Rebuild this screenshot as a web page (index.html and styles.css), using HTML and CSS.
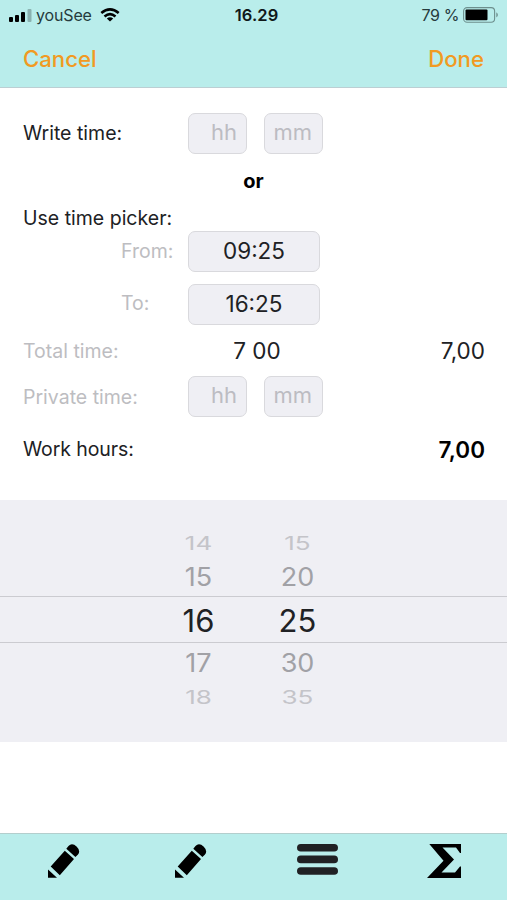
FILE: index.html
```html
<!DOCTYPE html>
<html lang="en">
<head>
<meta charset="utf-8">
<title>Work hours</title>
<link rel="stylesheet" href="styles.css">
</head>
<body>
<header class="header">
  <div class="status">
    <div class="carrier">
      <svg width="23" height="13" viewBox="0 0 23 13"><g fill="#000"><rect x="0" y="8" width="4" height="5" rx="1"/><rect x="6" y="6" width="4" height="7" rx="1"/><rect x="12" y="3" width="4" height="10" rx="1"/><rect x="18.5" y="0" width="4" height="13" rx="1" opacity=".25"/></g></svg>
      <span class="network">youSee</span>
      <svg class="wifi" width="20" height="14" viewBox="0 0 20 14"><g fill="none" stroke="#000" stroke-width="2.6"><path d="M1.3 5.1Q10-2.3 18.7 5.1"/><path d="M4.5 8.5Q10 3.9 15.5 8.5"/></g><path d="M10 13.5 6.8 10.4Q10 8 13.2 10.4Z"/></svg>
    </div>
    <span class="clock">16.29</span>
    <div class="power">
      <span class="percent">79 %</span>
      <svg width="36" height="16" viewBox="0 0 36 16"><rect x=".6" y=".6" width="31" height="14.6" rx="3.5" fill="none" stroke="#6d8f8d" stroke-width="1.1"/><rect x="2.5" y="2.5" width="22" height="10.8" rx="1"/><path d="M33.3 5.2Q36.5 7.9 33.3 10.6Z" fill="#6d8f8d"/></svg>
    </div>
  </div>
  <nav class="nav"><span class="cancel">Cancel</span><span class="done">Done</span></nav>
</header>
<main class="form">
  <div class="row row-write"><span class="label write">Write time:</span><div class="pair"><span class="field hh"><i>hh</i></span><span class="field mm"><i>mm</i></span></div></div>
  <div class="or">or</div>
  <div class="heading">Use time picker:</div>
  <div class="row row-from"><span class="label muted indent from">From:</span><span class="field wide"><b>09:25</b></span></div>
  <div class="row row-to"><span class="label muted indent to">To:</span><span class="field wide"><b>16:25</b></span></div>
  <div class="row row-total"><span class="label muted total">Total time:</span><span class="sum">7 00</span><span class="result">7,00</span></div>
  <div class="row row-private"><span class="label muted private">Private time:</span><div class="pair"><span class="field hh"><i>hh</i></span><span class="field mm"><i>mm</i></span></div></div>
  <div class="row row-work"><span class="label work">Work hours:</span><span></span><span class="result strong">7,00</span></div>
</main>
<section class="picker">
  <div class="line far"><span>14</span><span>15</span></div>
  <div class="line near"><span>15</span><span>20</span></div>
  <div class="line selected"><span>16</span><span>25</span></div>
  <div class="line near below"><span>17</span><span>30</span></div>
  <div class="line far"><span>18</span><span>35</span></div>
</section>
<footer class="tabs">
  <div class="tab"><svg width="32" height="35" viewBox="0 0 32 35"><path d="M0 25.5 9 33.8H0ZM2.7 22.6 16.8 6.7 26 15 11.8 31.2ZM18.3 4.7 20.5 2.1Q24-1.8 28.8 2.8 33 7 29.8 10.7L27.4 13Z"/></svg></div>
  <div class="tab"><svg width="32" height="35" viewBox="0 0 32 35"><path d="M0 25.5 9 33.8H0ZM2.7 22.6 16.8 6.7 26 15 11.8 31.2ZM18.3 4.7 20.5 2.1Q24-1.8 28.8 2.8 33 7 29.8 10.7L27.4 13Z"/></svg></div>
  <div class="tab menu"><svg width="41" height="31" viewBox="0 0 41 31" fill="#202124"><rect width="41" height="7.6" rx="3.8"/><rect y="11.6" width="41" height="7.6" rx="3.8"/><rect y="23.2" width="41" height="7.6" rx="3.8"/></svg></div>
  <div class="tab"><svg width="34" height="34" viewBox="0 0 34 34"><path d="M2.3 0H34V9H33L29 3.5H15.5L27 15.5 14.5 28.5H28L33 22.5H34V34H0L16.5 16.8Z"/></svg></div>
</footer>
</body>
</html>
```
FILE: styles.css
```css
* { box-sizing: border-box; }
body { margin: 0; width: 507px; height: 900px; background: #fff; color: #202124; font-family: Inter, "Liberation Sans", sans-serif; display: flex; flex-direction: column; overflow: hidden; white-space: nowrap; }
svg { display: block; flex: none; }
i, b { font-style: normal; font-weight: 400; }

.header { height: 88px; background: #b9edeb; border-bottom: 1px solid #bccfd3; }
.status { height: 30px; padding: 0 8px 0 9px; display: grid; grid-template-columns: 1fr auto 1fr; align-items: center; font-size: 16px; }
.carrier, .power { display: flex; align-items: center; color: #263b3d; }
.network { margin-left: 4px; width: 56px; letter-spacing: -.15px; }
.wifi { margin-left: 8px; }
.clock { font-weight: 600; font-size: 16.5px; color: #101819; letter-spacing: .1px; margin-left: 5px; }
.power { justify-content: flex-end; gap: 4px; }
.percent { letter-spacing: -.4px; }
.nav { height: 56px; padding: 0 23px; display: flex; justify-content: space-between; align-items: center; color: #f19a22; font-size: 22.2px; font-weight: 500; }

.form { height: 412px; padding: 25px 22px 0 23px; font-size: 20px; }
.row { display: grid; grid-template-columns: 165px 138px 1fr; align-items: center; height: 41px; }
.label { font-size: 19.5px; padding-bottom: 2px; }
.muted { color: #bdbdc1; }
.indent { padding-left: 98px; }
.to { padding-bottom: 3px; }
.total, .private { padding-bottom: 0; }
.pair { display: flex; gap: 17px; }
.field { height: 41px; background: #efeff4; border: 1px solid #d9d9dd; border-radius: 7px; display: flex; align-items: center; }
.hh, .mm { width: 59px; justify-content: flex-end; padding: 0 9px 3px 0; color: #bcbcc2; font-size: 22px; }
.mm { padding-right: 10px; }
.wide { width: 132px; justify-content: center; font-size: 22.5px; padding-bottom: 2px; }
.or { height: 54px; line-height: 54px; padding-right: 1px; text-align: center; font-weight: 700; color: #000; }
.heading { height: 23px; line-height: 20px; font-size: 19.5px; }
.row-to { margin-top: 12px; }
.row-total { height: 51px; }
.row-work { height: 66px; }
.work { letter-spacing: -.1px; }
.sum { width: 138px; text-align: center; font-size: 22.5px; }
.result { text-align: right; font-size: 22.5px; }
.strong { font-weight: 600; color: #000; padding-bottom: 2px; }

.picker { height: 242px; background: #efeff4; padding-top: 28px; }
.line { height: 30px; padding-left: 149px; display: grid; grid-template-columns: 99px 99px; align-items: center; text-align: center; }
.line span { display: block; }
.far { font-size: 26px; color: #c4c4c9; }
.far span { transform: scaleY(.7); }
.near { height: 38px; font-size: 27px; color: #a1a1a6; }
.near span { transform: scaleY(.94); }
.below { height: 39px; padding-top: 1px; }
.selected { height: 47px; border: solid #cbcbd0; border-width: 1px 0; font-size: 31px; padding-top: 1px; }

.tabs { margin-top: auto; height: 67px; background: #b9edeb; border-top: 1px solid #b3cecd; display: grid; grid-template-columns: repeat(4, 1fr); padding-top: 10px; }
.tab { display: flex; justify-content: center; align-items: flex-start; padding-left: 1px; }
.menu { padding-left: 2px; }
```
